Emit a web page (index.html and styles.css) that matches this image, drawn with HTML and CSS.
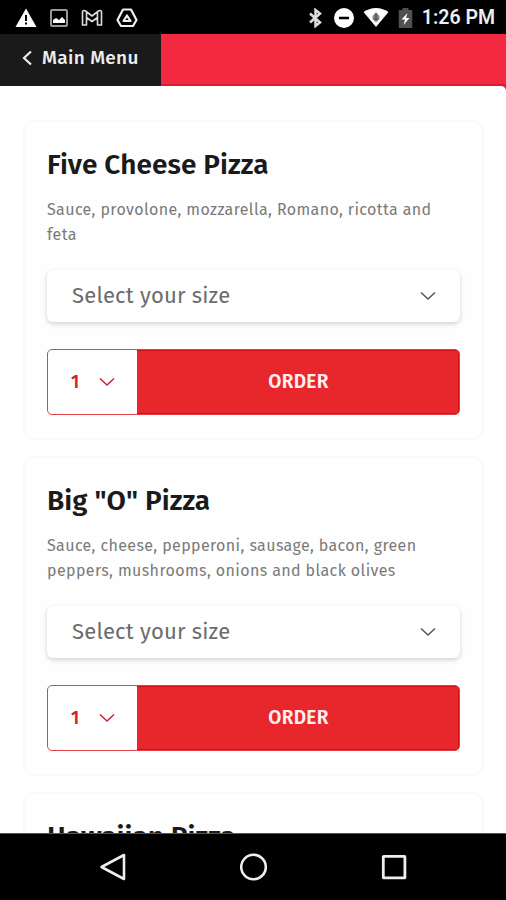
FILE: index.html
```html
<!DOCTYPE html>
<html lang="en">
<head>
<meta charset="utf-8">
<meta name="viewport" content="width=device-width">
<title>Pizza Menu</title>
<link rel="stylesheet" href="styles.css">
</head>
<body>
<div class="status">
  <div class="status-left">
    <svg width="22" height="20" viewBox="0 0 22 20"><path d="M11 0.5 L21.5 19 H.5Z" fill="#fff"/><path d="M11 7v6M11 14.500v2" stroke="#000" stroke-width="2"/></svg>
    <svg width="18" height="18" viewBox="0 0 18 18"><rect x="1" y="1" width="16" height="16" rx="1" fill="none" stroke="#999" stroke-width="2"/><path d="M3 14v-3l3-2 3 2 3-3 3 3v3z" fill="#fff"/></svg>
    <svg width="22" height="18" viewBox="0 0 22 18"><path d="M1.500 16V3Q2 .5 4.500 2L11 7 17.500 2Q20 .5 20.500 3V16H16.500V8.500L11 12.500 5.500 8.500V16ZM5.500 8.500V3M16.500 8.500V3" fill="none" stroke="#ddd" stroke-width="1.600" stroke-linejoin="round"/></svg>
    <svg width="22" height="20" viewBox="0 0 22 20"><path d="M7 1.500H15L20.500 12 17 18H5L1.500 12Z" fill="none" stroke="#eee" stroke-width="2.200" stroke-linejoin="round"/><path d="M11 7.500 14.500 13H7.500Z" fill="none" stroke="#eee" stroke-width="2.200" stroke-linejoin="round"/></svg>
  </div>
  <div class="status-right">
    <svg class="bt" width="14" height="20" viewBox="0 0 14 20"><path d="M1.500 5.500 11.500 14.500 7 18V2L11.500 5.500 1.500 14.500" fill="none" stroke="#ddd" stroke-width="2.500"/></svg>
    <svg class="dnd" width="21" height="20" viewBox="0 0 21 20"><circle cx="10.500" cy="10" r="10" fill="#fff"/><path d="M5.500 10h10" stroke="#000" stroke-width="2.500"/></svg>
    <svg class="wifi" width="25" height="19" viewBox="0 0 25 19"><path d="M0 4Q12.500-4 25 4L12.500 19Z" fill="#fff"/><path d="M12.500 4 16 8V11L12.500 14.500 9 11V8Z" fill="#888"/><path d="M12.500 6v4M10.500 11h4" stroke="#333" stroke-width="1"/></svg>
    <svg class="battery" width="14" height="20" viewBox="0 0 14 20"><path d="M4 0h6v2h4v18H0V2h4z" fill="#505050"/><path d="M9 5 3 11.500h3.500L5 17l6-7H7.500Z" fill="#fff"/></svg>
    <span class="clock">1:26 PM</span>
  </div>
</div>
<header class="header">
  <a class="back"><svg width="11" height="16" viewBox="0 0 11 16"><path d="M9 1.500 2 8l7 6.500" fill="none" stroke="#eee" stroke-width="2.200"/></svg><span>Main Menu</span></a>
  <div class="bar"></div>
</header>
<div class="page">
<main class="menu">
  <section class="card">
    <h2>Five Cheese Pizza</h2>
    <p>Sauce, provolone, mozzarella, Romano, ricotta and feta</p>
    <div class="size"><span>Select your size</span><svg width="16" height="10" viewBox="0 0 16 10"><path d="M1 1.500 8 8l7-6.500" fill="none" stroke="#555" stroke-width="1.500"/></svg></div>
    <div class="buy"><div class="qty"><span>1</span><svg width="16" height="10" viewBox="0 0 16 10"><path d="M1 1.500 8 8l7-6.500" fill="none" stroke="#d71f2b" stroke-width="1.500"/></svg></div><div class="order"><span>ORDER</span></div></div>
  </section>
  <section class="card">
    <h2>Big "O" Pizza</h2>
    <p>Sauce, cheese, pepperoni, sausage, bacon, green peppers, mushrooms, onions and black olives</p>
    <div class="size"><span>Select your size</span><svg width="16" height="10" viewBox="0 0 16 10"><path d="M1 1.500 8 8l7-6.500" fill="none" stroke="#555" stroke-width="1.500"/></svg></div>
    <div class="buy"><div class="qty"><span>1</span><svg width="16" height="10" viewBox="0 0 16 10"><path d="M1 1.500 8 8l7-6.500" fill="none" stroke="#d71f2b" stroke-width="1.500"/></svg></div><div class="order"><span>ORDER</span></div></div>
  </section>
  <section class="card">
    <h2 class="flush">Hawaiian Pizza</h2>
  </section>
</main>
</div>
<nav class="nav">
  <svg width="28" height="30" viewBox="0 0 28 30"><path d="M24 3v24L1.500 15Z" fill="none" stroke="#eee" stroke-width="2.600" stroke-linejoin="round"/></svg>
  <svg width="28" height="30" viewBox="0 0 28 30"><circle cx="13.500" cy="15" r="12.300" fill="none" stroke="#eee" stroke-width="2.600"/></svg>
  <svg width="28" height="30" viewBox="0 0 28 30"><rect x="3.300" y="4.300" width="21.600" height="21.600" rx=".5" fill="none" stroke="#eee" stroke-width="2.800"/></svg>
</nav>
</body>
</html>
```
FILE: styles.css
```css
* { box-sizing: border-box; }
body {
  margin: 0;
  height: 900px;
  overflow: hidden;
  display: flex;
  flex-direction: column;
  background: #fff;
  font-family: "Fira Sans", "Noto Sans", sans-serif;
}
svg { display: block; flex: none; }
span { white-space: nowrap; }
.status {
  height: 34px;
  flex: none;
  background: #000;
  display: flex;
  justify-content: space-between;
  align-items: center;
  padding: 1px 11px 0 15px;
}
.status-left { display: flex; align-items: center; gap: 13px; }
.status-right { display: flex; align-items: center; }
.dnd { margin-left: 11px; }
.wifi { margin-left: 9px; }
.battery { margin-left: 10px; }
.bt, .dnd, .wifi, .battery { transform: translateX(1.5px); }
.clock {
  margin-left: 11px;
  padding-top: 1px;
  color: #eee;
  font: 600 19.500px/24px Roboto, sans-serif;
}
.header {
  height: 52px;
  flex: none;
  display: flex;
}
.bar {
  flex: 1;
  background: #f22941;
  border-bottom: 2px solid #e51735;
}
.back {
  width: 161px;
  padding: 0 0 5px 22px;
  display: flex;
  align-items: center;
  gap: 9px;
  background: #1a1a1a;
  color: #eee;
  font-size: 19px;
  letter-spacing: 0.35px;
  font-weight: 500;
}
.page {
  flex: 1;
  min-height: 0;
  background: linear-gradient(90deg, #fff 50%, #e51735 50%);
}
.menu {
  height: 100%;
  overflow: hidden;
  padding: 34px 22px 0 23px;
  background: #fff;
  border-top-right-radius: 5px;
}
.card {
  height: 320px;
  margin-bottom: 16px;
  padding: 24px 22px;
  border: 2px solid #f9f9f9;
  border-radius: 10px;
  background: #fefefe;
}
h2 {
  margin: 0;
  height: 40px;
  font-size: 28px;
  line-height: 38px;
  letter-spacing: 0.07px;
  font-weight: 600;
  color: #1a1a1a;
}
h2.flush { letter-spacing: 0; }
p {
  margin: 11px 0 0;
  height: 50px;
  font-size: 16px;
  line-height: 25px;
  letter-spacing: 0.39px;
  color: #7a7a7a;
}
.size {
  margin-top: 23px;
  height: 52px;
  padding: 0 25px 2px;
  display: flex;
  align-items: center;
  justify-content: space-between;
  border-radius: 6px;
  background: #fff;
  box-shadow: 0 2px 5px rgba(0, 0, 0, 0.18);
  color: #6c6c6c;
  font-size: 22px;
  letter-spacing: 0.2px;
}
.size svg { transform: translate(1px, 1px); }
.buy {
  margin-top: 27px;
  height: 66px;
  display: flex;
  border: 1px solid #e2414a;
  border-radius: 5px;
  overflow: hidden;
}
.qty {
  width: 89px;
  padding-left: 23px;
  display: flex;
  align-items: center;
  gap: 20px;
  color: #d71f2b;
  font-size: 18px;
  font-weight: 600;
}
.order {
  flex: 1;
  display: flex;
  align-items: center;
  justify-content: center;
  padding: 0 0 2px 2px;
  background: #e7272c;
  border: solid #d70d17;
  border-width: 1px 1px 1px 0;
  color: #fff0ef;
  font-size: 19px;
  letter-spacing: 0.3px;
  font-weight: 600;
}
.nav {
  height: 67px;
  flex: none;
  display: flex;
  align-items: center;
  justify-content: center;
  gap: 112px;
  padding-left: 1px;
  background: #000;
  border-top: 1px solid #555;
}
```
